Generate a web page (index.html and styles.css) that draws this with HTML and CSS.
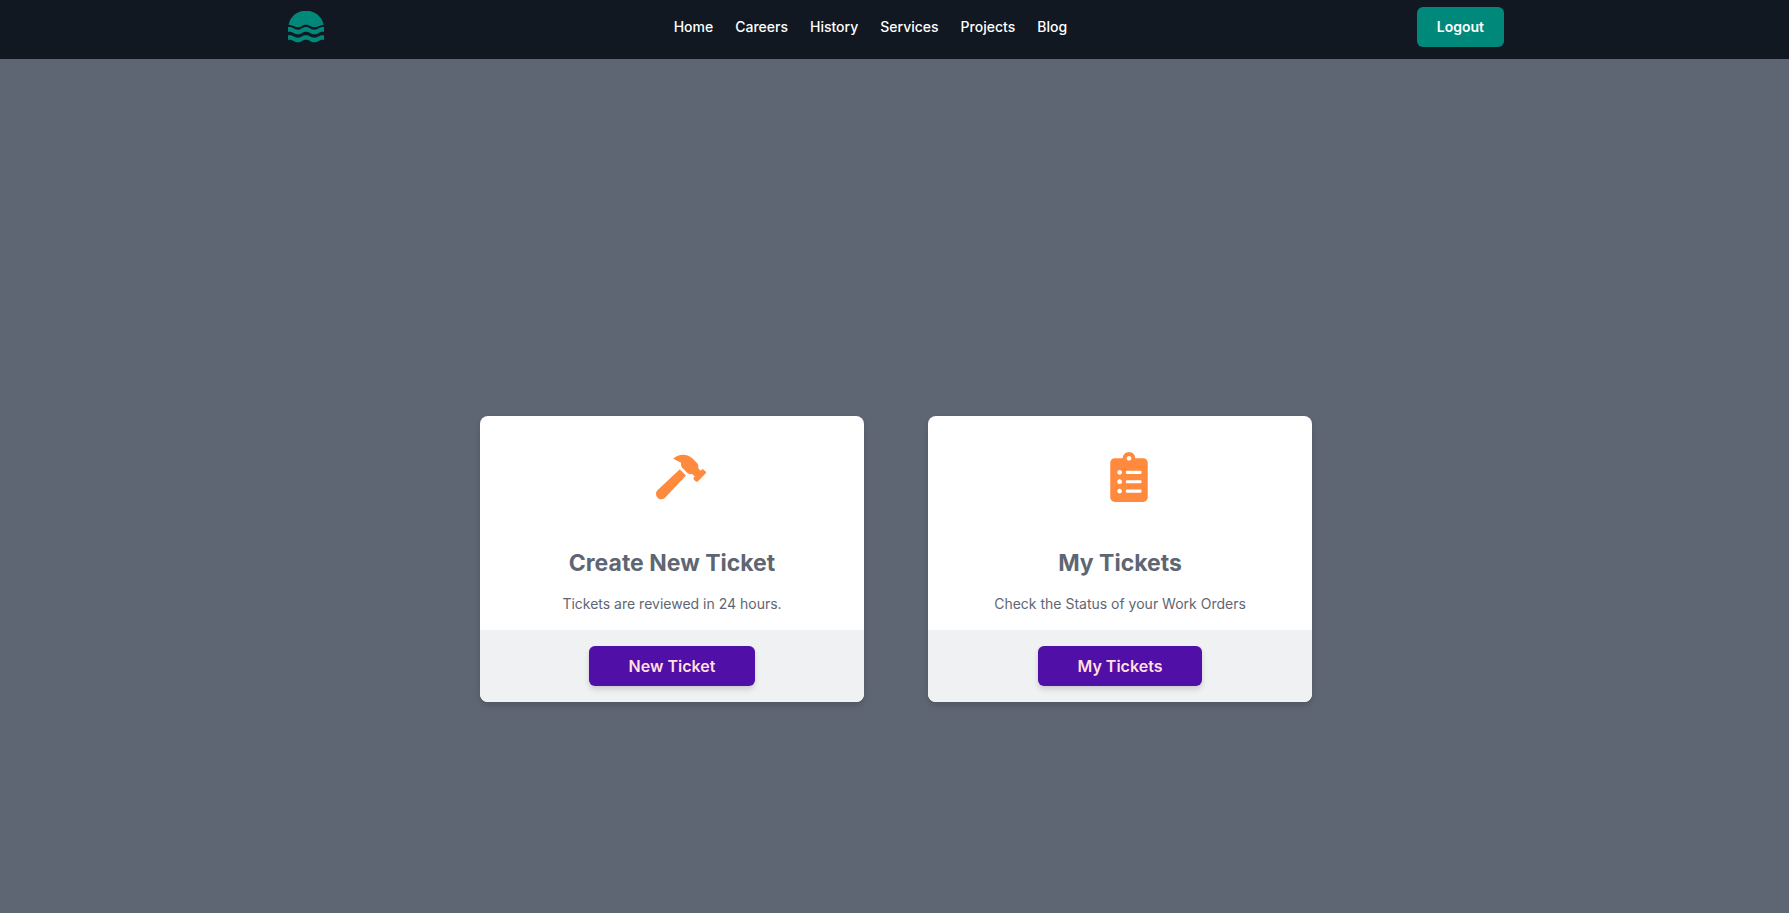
FILE: index.html
```html
<!DOCTYPE html>
<html lang="en">
<head>
<meta charset="utf-8">
<meta name="viewport" content="width=device-width, initial-scale=1">
<title>Tickets</title>
<link rel="stylesheet" href="styles.css">
</head>
<body>
<header class="header">
  <div class="header-inner">
    <a class="logo" href="#" aria-label="Company home">
      <svg viewBox="54 34 108 96" width="36" height="32" aria-hidden="true">
        <path fill="currentColor" d="M56 76C60 50 82 33 108 33S156 50 161 76C148 76 147 82 134 82C120 82 120 75 108 75S96 82 84 82C70 82 69 76 56 76Z"/>
        <g fill="currentColor">
          <path d="M54 82H58C70 82 72 90 84 90S96 82 108 82S120 90 133 90S147 82 158 82H162V96H158C147 96 145 104 133 104S120 96 108 96S96 104 84 104S70 96 58 96H54Z"/>
          <path d="M54 107H58C70 107 72 114 84 114S96 107 108 107S120 114 133 114S147 107 158 107H162V120H158C147 120 145 128 133 128S120 120 108 120S96 128 84 128S70 120 58 120H54Z"/>
        </g>
      </svg>
    </a>
    <nav class="nav" aria-label="Main">
      <a href="#">Home</a>
      <a href="#">Careers</a>
      <a href="#">History</a>
      <a href="#">Services</a>
      <a href="#">Projects</a>
      <a href="#">Blog</a>
    </nav>
    <button class="logout" type="button">Logout</button>
  </div>
</header>
<main class="main">
  <div class="cards">
    <section class="card">
      <div class="card-body">
        <div class="card-icon">
          <svg viewBox="0 0 576 512" width="50" height="50" aria-hidden="true"><path fill="currentColor" d="M571.31 193.94l-22.63-22.63c-6.25-6.25-16.38-6.25-22.63 0l-11.31 11.31-28.9-28.9c5.63-21.31.36-44.9-16.35-61.61l-45.25-45.25c-62.48-62.48-163.79-62.48-226.28 0l90.51 45.25v18.75c0 16.97 6.74 33.25 18.75 45.25l49.14 49.14c16.71 16.71 40.3 21.98 61.61 16.35l28.9 28.9-11.31 11.31c-6.25 6.25-6.25 16.38 0 22.63l22.63 22.63c6.25 6.25 16.38 6.25 22.63 0l90.51-90.51c6.23-6.24 6.23-16.37-.02-22.62zm-286.72-15.2c-3.7-3.7-6.84-7.79-9.85-11.95L19.64 404.96c-25.57 23.88-26.26 64.19-1.53 88.93s65.05 24.05 88.92-1.53l238.13-255.07c-3.96-2.91-7.9-5.87-11.44-9.41l-49.13-49.14z"/></svg>
        </div>
        <h2 class="card-title">Create New Ticket</h2>
        <p class="card-text">Tickets are reviewed in 24 hours.</p>
      </div>
      <div class="card-footer"><button class="action" type="button">New Ticket</button></div>
    </section>
    <section class="card">
      <div class="card-body">
        <div class="card-icon">
          <svg viewBox="0 0 384 512" width="50" height="50" aria-hidden="true"><path fill="currentColor" d="M336 64h-80c0-35.3-28.7-64-64-64s-64 28.7-64 64H48C21.5 64 0 85.5 0 112v352c0 26.5 21.5 48 48 48h288c26.5 0 48-21.5 48-48V112c0-26.5-21.5-48-48-48zM96 424c-13.3 0-24-10.7-24-24s10.7-24 24-24 24 10.7 24 24-10.7 24-24 24zm0-96c-13.3 0-24-10.7-24-24s10.7-24 24-24 24 10.7 24 24-10.7 24-24 24zm0-96c-13.3 0-24-10.7-24-24s10.7-24 24-24 24 10.7 24 24-10.7 24-24 24zm96-192c13.3 0 24 10.7 24 24s-10.7 24-24 24-24-10.7-24-24 10.7-24 24-24zm128 368c0 4.4-3.6 8-8 8H168c-4.4 0-8-3.6-8-8v-16c0-4.4 3.6-8 8-8h144c4.4 0 8 3.6 8 8v16zm0-96c0 4.4-3.6 8-8 8H168c-4.4 0-8-3.6-8-8v-16c0-4.4 3.6-8 8-8h144c4.4 0 8 3.6 8 8v16zm0-96c0 4.4-3.6 8-8 8H168c-4.4 0-8-3.6-8-8v-16c0-4.4 3.6-8 8-8h144c4.4 0 8 3.6 8 8v16z"/></svg>
        </div>
        <h2 class="card-title">My Tickets</h2>
        <p class="card-text">Check the Status of your Work Orders</p>
      </div>
      <div class="card-footer"><button class="action" type="button">My Tickets</button></div>
    </section>
  </div>
</main>
</body>
</html>
```
FILE: styles.css
```css
* {
  box-sizing: border-box;
}

body {
  display: flex;
  flex-direction: column;
  min-height: 100vh;
  margin: 0;
  background: #5f6673;
  color: #5f6673;
  font-family: Inter, "Liberation Sans", sans-serif;
  font-size: 14px;
  line-height: 20px;
}

button {
  border: 0;
  font-family: inherit;
  cursor: pointer;
}

.header {
  padding: 7px 0 12px 3px;
  background: #111822;
}

.header-inner {
  display: flex;
  align-items: center;
  justify-content: space-between;
  max-width: 1280px;
  margin: 0 auto;
  padding: 0 32px;
}

.logo,
.logo svg {
  display: block;
  color: #00897b;
}

.nav {
  display: flex;
  flex-wrap: wrap;
  gap: 22px;
}

.nav a {
  color: #fff;
  font-weight: 500;
  text-decoration: none;
}

.logout {
  padding: 10px 20px;
  border-radius: 6px;
  background: #00897b;
  color: #fff;
  font-size: 14px;
  font-weight: 600;
  line-height: 20px;
}

.main {
  display: flex;
  flex: 1;
  align-items: center;
  justify-content: center;
  padding: 146px 0 0 3px;
}

.cards {
  display: flex;
  flex-wrap: wrap;
  justify-content: center;
  gap: 64px;
}

.card {
  width: 384px;
  max-width: 100%;
  overflow: hidden;
  border-radius: 8px;
  background: #fff;
  box-shadow: 0 4px 6px rgba(0, 0, 0, 0.1), 0 2px 4px rgba(0, 0, 0, 0.06);
  text-align: center;
}

.card-body {
  padding: 36px 32px 16px;
}

.card-icon {
  width: 32px;
  height: 50px;
  margin: 0 auto;
  color: #ff8a3d;
}

.card-icon svg {
  display: block;
}

.card-title {
  margin: 45px 0 15px;
  font-size: 23px;
  font-weight: 700;
  line-height: 32px;
}

.card-text {
  margin: 0;
}

.card-footer {
  padding: 16px;
  background: #f0f1f3;
}

.action {
  padding: 8px 40px;
  border-radius: 6px;
  background: #500fa6;
  box-shadow: 0 4px 6px rgba(0, 0, 0, 0.1), 0 2px 4px rgba(0, 0, 0, 0.06);
  color: #ffdfdf;
  font-size: 16px;
  font-weight: 600;
  line-height: 24px;
}

.card-footer .action {
  display: block;
  margin: 0 auto;
}
```
